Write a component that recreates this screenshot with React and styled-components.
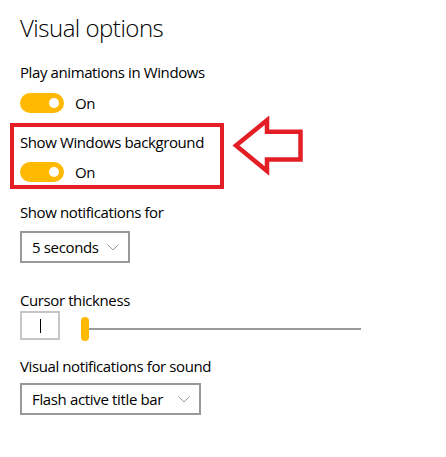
import React from "react";
import styled, { createGlobalStyle } from "styled-components";

const GlobalStyle = createGlobalStyle`
  html, body { margin: 0; padding: 0; background: #ffffff; }
  body { font-family: "Open Sans", "Noto Sans", sans-serif; color: #000000; }
`;

const Page = styled.div`
  position: relative;
  width: 446px;
  height: 457px;
  box-sizing: border-box;
  padding: 12px 20px 0;
  display: flex;
  flex-direction: column;
  align-items: flex-start;
`;

const Title = styled.h1`
  margin: 0;
  font-size: 24px;
  line-height: 32px;
  font-weight: 300;
  letter-spacing: -0.5px;
`;

const Label = styled.div`
  font-size: 15px;
  line-height: 20px;
  letter-spacing: -0.4px;
  margin-top: ${(p) => p.$top || 0}px;
  white-space: nowrap;
`;

const ToggleRow = styled.div`
  display: flex;
  align-items: center;
  gap: 11px;
  margin-top: ${(p) => p.$top || 0}px;
  font-size: 15px;
  line-height: 20px;
  letter-spacing: -0.3px;
`;

const Track = styled.span`
  position: relative;
  width: 44px;
  height: 20px;
  border-radius: 10px;
  background: #ffb900;
  &::after {
    content: "";
    position: absolute;
    top: 5px;
    right: 5px;
    width: 10px;
    height: 10px;
    border-radius: 50%;
    background: #ffffff;
  }
`;

const Highlight = styled.div`
  margin: 10px 0 0 -10px;
  width: 214px;
  box-sizing: border-box;
  border: 4px solid #e31e24;
  padding: 5px 6px 3px;
`;

const Dropdown = styled.div`
  margin-top: ${(p) => p.$top || 0}px;
  width: ${(p) => p.$width}px;
  height: 32px;
  box-sizing: border-box;
  border: 2px solid #999999;
  padding: 0 9px 0 10px;
  display: flex;
  align-items: center;
  justify-content: space-between;
  font-size: 15px;
  line-height: 20px;
  letter-spacing: -0.35px;
  white-space: nowrap;
`;

const Chevron = () => (
  <svg width="12" height="7" viewBox="0 0 12 7">
    <polyline points="0.5,0.5 6,6 11.5,0.5" fill="none" stroke="#9a9a9a" strokeWidth="1" />
  </svg>
);

const CursorRow = styled.div`
  display: flex;
  align-items: flex-start;
  gap: 21px;
  margin-top: 1px;
`;

const CursorBox = styled.div`
  width: 40px;
  height: 29px;
  box-sizing: border-box;
  border: 2px solid #c6c6c6;
  display: flex;
  align-items: center;
  justify-content: center;
  &::before {
    content: "";
    width: 1px;
    height: 14px;
    background: #000000;
  }
`;

const Slider = styled.div`
  position: relative;
  width: 280px;
  height: 36px;
  display: flex;
  align-items: center;
`;

const SliderTrack = styled.div`
  width: 100%;
  height: 2px;
  background: #9a9a9a;
`;

const Thumb = styled.div`
  position: absolute;
  left: 0;
  top: 6px;
  width: 8px;
  height: 24px;
  border-radius: 4px;
  background: #ffb900;
`;

const Arrow = styled.svg`
  position: absolute;
  left: 228px;
  top: 112px;
`;

export default function App() {
  return (
    <>
      <GlobalStyle />
      <Page>
        <Title>Visual options</Title>
        <Label $top={18}>Play animations in Windows</Label>
        <ToggleRow $top={11}>
          <Track />
          <span>On</span>
        </ToggleRow>
        <Highlight>
          <Label>Show Windows background</Label>
          <ToggleRow $top={10}>
            <Track />
            <span>On</span>
          </ToggleRow>
        </Highlight>
        <Label $top={13}>Show notifications for</Label>
        <Dropdown $top={9} $width={110}>
          <span>5 seconds</span>
          <Chevron />
        </Dropdown>
        <Label $top={27}>Cursor thickness</Label>
        <CursorRow>
          <CursorBox />
          <Slider>
            <SliderTrack />
            <Thumb />
          </Slider>
        </CursorRow>
        <Label $top={9}>Visual notifications for sound</Label>
        <Dropdown $top={7} $width={181}>
          <span>Flash active title bar</span>
          <Chevron />
        </Dropdown>
        <Arrow width="80" height="68" viewBox="0 0 80 68">
          <polygon
            points="8,33.5 39,8.3 39,19.7 72.5,19.7 72.5,47.5 39,47.5 39,59"
            fill="#ffffff"
            stroke="#e31e24"
            strokeWidth="4.5"
            strokeLinejoin="miter"
          />
        </Arrow>
      </Page>
    </>
  );
}
